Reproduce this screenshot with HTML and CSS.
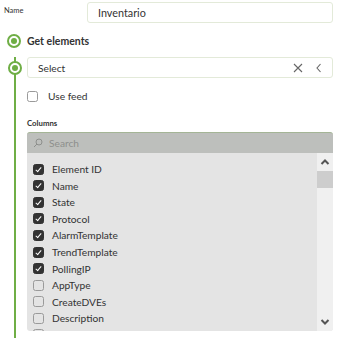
FILE: index.html
```html
<!DOCTYPE html>
<html>
<head lang="en">
    <meta charset="UTF-8">
    <title>Get elements</title>
    <link rel="stylesheet" href="styles.css">
</head>
<body>
<div class="name-row">
    <span class="name-label">Name</span>
    <div class="field name-field">Inventario</div>
</div>
<div class="steps">
    <div class="step-title"><span class="dot"></span>Get elements</div>
    <div class="field select-field">
        <span class="dot"></span>
        <span class="select-text">Select</span>
        <svg class="ico" width="10" height="10" viewBox="0 0 10 10"><path d="M1 1L9 9M9 1L1 9" stroke="#666" stroke-width="1.1" fill="none"/></svg>
        <svg class="ico" width="10" height="10" viewBox="0 0 10 10"><path d="M6.5 1L3 5L6.5 9" stroke="#666" stroke-width="1.1" fill="none"/></svg>
    </div>
    <label class="feed-row"><span class="box"></span>Use feed</label>
    <div class="columns-title">Columns</div>
    <div class="search">
        <svg width="10" height="10" viewBox="0 0 10 10"><circle cx="6" cy="4" r="3" stroke="#8d8f8c" fill="none"/><path d="M4 6L1 9" stroke="#8d8f8c"/></svg>
        <span>Search</span>
    </div>
    <div class="list">
        <ul class="items">
            <li><span class="box on"></span>Element ID</li>
            <li><span class="box on"></span>Name</li>
            <li><span class="box on"></span>State</li>
            <li><span class="box on"></span>Protocol</li>
            <li><span class="box on"></span>AlarmTemplate</li>
            <li><span class="box on"></span>TrendTemplate</li>
            <li><span class="box on"></span>PollingIP</li>
            <li><span class="box"></span>AppType</li>
            <li><span class="box"></span>CreateDVEs</li>
            <li><span class="box"></span>Description</li>
            <li><span class="box"></span></li>
        </ul>
        <div class="scrollbar">
            <svg width="10" height="8" viewBox="0 0 10 8"><path d="M1.5 6L5 2.5L8.5 6" stroke="#555" stroke-width="2" fill="none"/></svg>
            <div class="thumb"></div>
            <div class="track"></div>
            <svg width="10" height="8" viewBox="0 0 10 8"><path d="M1.5 2L5 5.5L8.5 2" stroke="#555" stroke-width="2" fill="none"/></svg>
        </div>
    </div>
</div>
</body>
</html>
```

FILE: styles.css
```css
body {
    margin: 0;
    background: #fff;
    color: #333;
    font-family: Lato, "Open Sans", Arial, sans-serif;
    font-size: 10.2px;
}

.name-row {
    display: flex;
    align-items: center;
    padding: 1px 6px 0 4px;
    height: 22px;
}
.name-label {
    width: 83px;
    font-size: 7.5px;
    margin-top: -3px;
}

.field {
    box-sizing: border-box;
    height: 21px;
    border: 1px solid #e3ead9;
    border-radius: 3px;
    background: #fff;
    display: flex;
    align-items: center;
}
.name-field {
    flex: 1;
    padding-left: 10px;
    font-size: 10.8px;
}

.steps {
    position: relative;
    padding: 6px 6px 0 27px;
    height: 310px;
}
.steps::before {
    content: "";
    position: absolute;
    left: 14px;
    top: 34px;
    bottom: 0;
    width: 2px;
    background: #6fae45;
}

.dot {
    position: absolute;
    left: -20px;
    width: 10px;
    height: 10px;
    border: 2px solid #6fae45;
    border-radius: 50%;
    background: #fff;
}
.dot::after {
    content: "";
    position: absolute;
    left: 2px;
    top: 2px;
    width: 6px;
    height: 6px;
    border-radius: 50%;
    background: #6fae45;
}

.step-title {
    position: relative;
    display: flex;
    align-items: center;
    height: 24px;
    font-weight: bold;
    font-size: 10.5px;
}

.select-field {
    position: relative;
    margin-top: 4px;
    padding: 0 8px 0 10px;
    gap: 11px;
}
.select-text {
    flex: 1;
}

.feed-row {
    display: flex;
    align-items: center;
    gap: 10px;
    margin-top: 9px;
    height: 18px;
}

.box {
    box-sizing: border-box;
    width: 11px;
    height: 11px;
    border: 1px solid #9a9a9a;
    border-radius: 2.5px;
    flex: none;
}
.box.on {
    background: #333;
    border-color: #333;
    position: relative;
}
.box.on::after {
    content: "";
    position: absolute;
    left: 3px;
    top: 1px;
    width: 2px;
    height: 5px;
    border: solid #fff;
    border-width: 0 1px 1px 0;
    transform: rotate(40deg);
}

.columns-title {
    margin-top: 13px;
    font-weight: bold;
    font-size: 7.8px;
    height: 13px;
}

.search {
    box-sizing: border-box;
    height: 21px;
    margin-top: 1px;
    background: #bdbfbc;
    border-top: 1px solid #a4b596;
    border-radius: 3px 3px 0 0;
    display: flex;
    align-items: center;
    gap: 6px;
    padding-left: 6px;
    color: #8d8f8c;
}

.list {
    display: flex;
    height: 178px;
    background: #e4e4e4;
    border-radius: 0 0 3px 3px;
    overflow: hidden;
}

.items {
    flex: 1;
    list-style: none;
    margin: 0;
    padding: 8px 0 0 6px;
}
.items li {
    display: flex;
    align-items: center;
    gap: 8px;
    height: 16.55px;
}

.scrollbar {
    width: 16px;
    background: #f0f0f0;
    display: flex;
    flex-direction: column;
    align-items: center;
}
.scrollbar svg {
    margin: 5px 0;
}
.thumb {
    width: 16px;
    height: 17px;
    background: #cdcdcd;
}
.track {
    flex: 1;
}
```
